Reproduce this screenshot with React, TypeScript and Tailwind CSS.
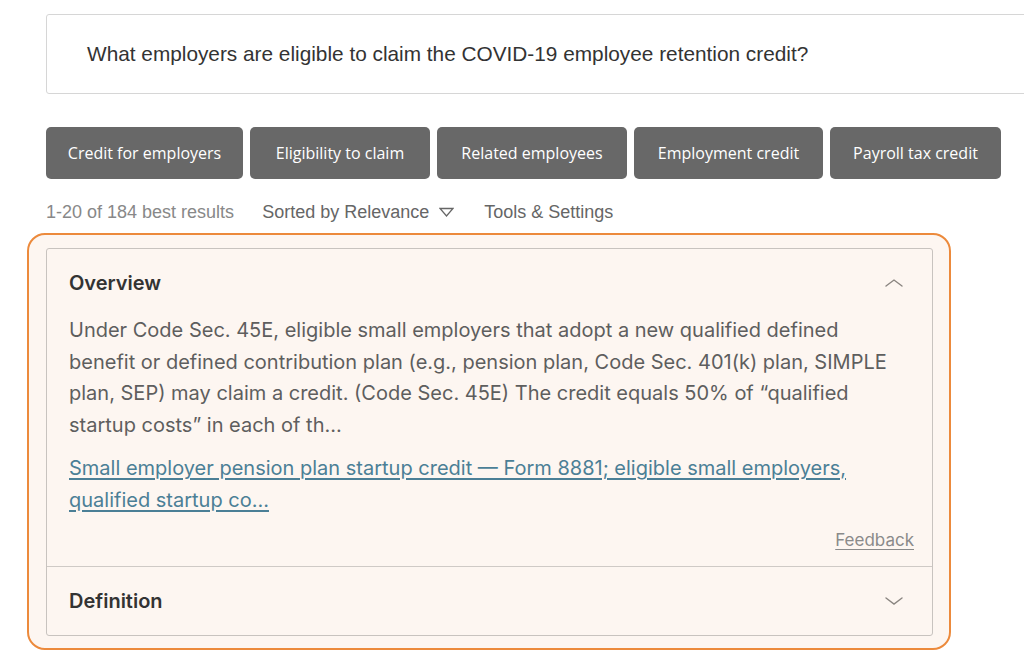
import React from 'react';

const chips = [
  { label: 'Credit for employers', w: 'w-[197px]' },
  { label: 'Eligibility to claim', w: 'w-[180px]' },
  { label: 'Related employees', w: 'w-[190px]' },
  { label: 'Employment credit', w: 'w-[189px]' },
  { label: 'Payroll tax credit', w: 'w-[171px]' },
];

const Chevron = ({ up }: { up?: boolean }) => (
  <svg width="20" height="10" viewBox="0 0 20 10" fill="none" stroke="#8a8580" strokeWidth="1.4" strokeLinecap="round">
    {up ? <path d="M2 8 L10 2 L18 8" /> : <path d="M2 2 L10 8 L18 2" />}
  </svg>
);

export default function App() {
  return (
    <div className="w-[1024px] h-[669px] overflow-hidden bg-white" style={{ fontFamily: '"Liberation Sans", Arial, sans-serif' }}>
      <div className="pt-[14px] pl-[46px]">
        {/* search query */}
        <div className="h-[80px] w-[1000px] border border-[#d6d6d6] rounded-[3px] flex items-center pl-[40px] text-[20.8px] text-[#333]">
          What employers are eligible to claim the COVID-19 employee retention credit?
        </div>

        {/* suggestion chips */}
        <div className="flex gap-[7px] mt-[33px]">
          {chips.map(c => (
            <div
              key={c.label}
              className={`${c.w} h-[52px] flex items-center justify-center rounded-[5px] bg-[#686868] text-white text-[16px] font-medium`}
              style={{ fontFamily: '"Open Sans", sans-serif' }}
            >
              {c.label}
            </div>
          ))}
        </div>

        {/* result stats */}
        <div className="flex items-center h-[24px] mt-[21px] text-[18px]">
          <span className="text-[#888]">1-20 of 184 best results</span>
          <span className="ml-[28px] text-[#666] flex items-center">
            Sorted by Relevance
            <svg className="ml-[10px]" width="15" height="10" viewBox="0 0 15 10" fill="none" stroke="#666" strokeWidth="1.3">
              <path d="M1 1.5 H14 L7.5 9 Z" />
            </svg>
          </span>
          <span className="ml-[30px] text-[#666]">Tools &amp; Settings</span>
        </div>
      </div>

      {/* highlighted answer */}
      <div className="ml-[27px] mt-[9px] w-[924px] h-[417px] border-2 border-[#ec8a3c] rounded-[18px] bg-[#fdf6f1] pt-[13px] pl-[17px]">
        <div className="w-[887px] h-[388px] border border-[#c8c3bf] rounded-[3px] flex flex-col" style={{ fontFamily: 'Inter, "Noto Sans", sans-serif' }}>
          <div className="pl-[22px] pr-[18px] pt-[20px] flex-1">
            <div className="flex items-center justify-between h-[28px] pr-[10px]">
              <span className="text-[20px] font-semibold text-[#333]">Overview</span>
              <Chevron up />
            </div>
            <p className="mt-[18px] text-[20px] leading-[31.5px] text-[#5e5e5e] w-[840px]">
              Under Code Sec. 45E, eligible small employers that adopt a new qualified defined benefit or defined contribution plan (e.g., pension plan, Code Sec. 401(k) plan, SIMPLE plan, SEP) may claim a credit. (Code Sec. 45E) The credit equals 50% of “qualified startup costs” in each of th...
            </p>
            <p className="mt-[12px] text-[20px] leading-[31.5px] text-[#4b7f96] underline underline-offset-[3px] w-[820px]">
              Small employer pension plan startup credit — Form 8881; eligible small employers, qualified startup co...
            </p>
            <div className="flex justify-end mt-[12px]">
              <span className="text-[17px] text-[#8a8a8a] underline underline-offset-[3px]">Feedback</span>
            </div>
          </div>
          <div className="h-[69px] border-t border-[#cfcac6] px-[22px] flex items-center justify-between pr-[28px]">
            <span className="text-[20px] font-semibold text-[#333]">Definition</span>
            <Chevron />
          </div>
        </div>
      </div>
    </div>
  );
}
